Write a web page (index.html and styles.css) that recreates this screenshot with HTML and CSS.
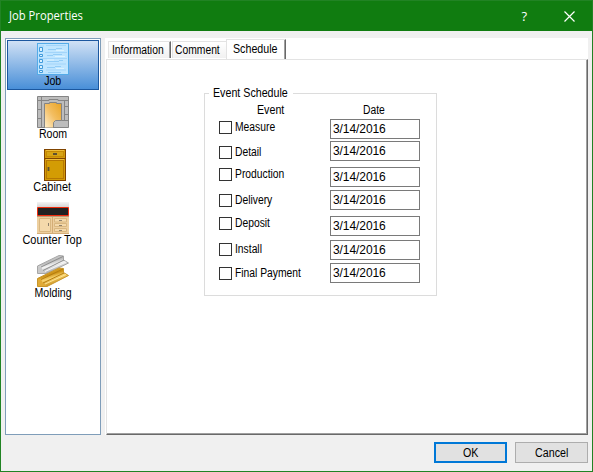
FILE: index.html
```html
<!DOCTYPE html>
<html lang="en">
<head>
<meta charset="utf-8">
<title>Job Properties</title>
<link rel="stylesheet" href="styles.css">
</head>
<body>
<div class="window">
  <header class="titlebar">
    <span class="title">Job Properties</span>
    <span class="help">?</span>
    <svg class="close" width="11" height="11" viewBox="0 0 11 11"><path d="M.5.5l10 10M10.500.5l-10 10" stroke="#fff" stroke-width="1.2"/></svg>
  </header>
  <div class="body">
    <nav class="sidebar">
      <div class="item selected">
        <svg width="32" height="32" viewBox="0 0 32 32">
          <rect x=".5" y=".5" width="31" height="31" fill="#bfe5ff" stroke="#54abe8"/>
          <path d="M2 3h5M9 2.500h20M8 9.500h22M2 15.500h28M8 21h21M9 27h20" stroke="#a3d5fa"/>
          <path d="M11 6.500h8M19 5.500h6M10 12.500h6M16 11.500h9M10 18.500h12M22 17.500h4M10 24.500h8M18 23.500h6M11 29.500h13" stroke="#93cdf7" fill="none"/>
          <path d="M19 7.500h8M18 13.500h10M10 17h7M19 25.500h8" stroke="#dcf3ff"/>
          <g fill="#d9f1ff" stroke="#419bdc"><path d="M2.500 4.500h3v4h-3zM2.500 11.500h3v2h-3zM2.500 16.500h3v3h-3zM2.500 22.500h3v3h-3zM2.500 27.500h3v2h-3z"/></g>
        </svg>
        <span class="label">Job</span>
      </div>
      <div class="item">
        <svg width="32" height="32" viewBox="0 0 32 32">
          <defs><linearGradient id="floor" x1="1" y1="0" x2="0" y2="1"><stop offset="0" stop-color="#e9a321"/><stop offset=".5" stop-color="#f3be62"/><stop offset="1" stop-color="#fff0cf"/></linearGradient></defs>
          <path d="M.5.5h31v31h-31z" fill="#bdbdbd" stroke="#858585"/>
          <path d="M7.500 32V7.500h5v-1h7v1h5V24.500h-6l-2 2V32z" fill="url(#floor)" stroke="#858585"/>
          <path d="M4.500 0v31M0 4.500h12v-1h9v1h11M0 13.500h4M0 22.500h4M27.500 5v19M27.500 10.500h4M27.500 18.500h4M24.500 24.500h7" stroke="#858585" fill="none"/>
        </svg>
        <span class="label">Room</span>
      </div>
      <div class="item">
        <svg width="32" height="32" viewBox="0 0 32 32">
          <rect x="7.500" y=".5" width="21" height="31" fill="#d39b09" stroke="#804400"/>
          <path d="M7 9.500h22" stroke="#804400"/>
          <rect x="9.500" y="2.500" width="17" height="5" fill="#d7a414" stroke="#c58a05"/>
          <rect x="9.500" y="11.500" width="17" height="18" fill="#d39c04" stroke="#b67803"/>
          <path d="M9 10.500h18M9 1.500h18" stroke="#efbd39"/>
          <path d="M16 5h4M11.500 18v4" stroke="#5d5032" stroke-width="1.800"/>
        </svg>
        <span class="label wide">Cabinet</span>
      </div>
      <div class="item">
        <svg width="32" height="32" viewBox="0 0 32 32">
          <defs><linearGradient id="wall" x2="0" y2="1"><stop offset="0" stop-color="#f4f4f4"/><stop offset="1" stop-color="#d5d5d5"/></linearGradient></defs>
          <path fill="url(#wall)" d="M0 0h32v5H0z"/>
          <path fill="#edcf9f" d="M0 14h32v18H0z"/>
          <path fill="#222" stroke="#f02b0c" d="M.5 5.500h31v8H.5z"/>
          <path d="M0 14.500h32" stroke="#b99c77"/>
          <g fill="#f4d9ab" stroke="#d9b780"><path d="M2.500 16.500h11v13h-11zM17.500 16.500h12v3.500h-12zM17.500 21.500h12v3h-12zM17.500 26.500h12v3h-12z"/></g>
          <path d="M15.500 15v16M0 31.500h32" stroke="#d4ad76"/><path d="M11.500 21v3M22 18.500h3M22 23.500h3M22 28.500h3" stroke="#8f816c"/>
        </svg>
        <span class="label wide">Counter Top</span>
      </div>
      <div class="item">
        <svg width="32" height="32" viewBox="0 0 32 32">
          <defs>
            <linearGradient id="steel" x1="0" y1="0" x2=".5" y2="1"><stop offset="0" stop-color="#ddd"/><stop offset=".45" stop-color="#bcbcbc"/><stop offset=".62" stop-color="#f4f4f4"/><stop offset="1" stop-color="#8d8d8d"/></linearGradient>
            <linearGradient id="brass" x1="0" y1="0" x2=".5" y2="1"><stop offset="0" stop-color="#e6b23a"/><stop offset=".45" stop-color="#cc9115"/><stop offset=".62" stop-color="#f8d36d"/><stop offset="1" stop-color="#bd810b"/></linearGradient>
          </defs>
          <path d="M.5 11L22 .5l4.500.5v4l5 3L10 18.500H.5z" fill="url(#steel)" stroke="#a6a6a6"/>
          <path d="M1 11.500l3 .5 2 3.500 4 2.500H1z" fill="#c9c9c9"/>
          <path d="M4 12L26 1.500M6 15.500L27 5" stroke="#8c8c8c"/>
          <path d="M8 16.500L29 7" stroke="#f6f6f6"/>
          <path d="M.5 23.500L22 13l4.500.5v4l5 3L10 31.500H.5z" fill="url(#brass)" stroke="#c9962a"/>
          <path d="M1 24l3 .5 2 3.500 4 3H1z" fill="#e0aa36"/>
          <path d="M4 24.500L26 14M6 28L27 18" stroke="#b67d10"/>
          <path d="M8 29L29 19.500" stroke="#ffe391"/>
        </svg>
        <span class="label">Molding</span>
      </div>
    </nav>
    <main class="tabs">
      <div class="tablist">
        <div class="tab information"><span class="text">Information</span></div>
        <div class="tab comment"><span class="text">Comment</span></div>
        <div class="tab active"><span class="text">Schedule</span></div>
      </div>
      <section class="pane">
        <div class="group">
          <div class="legend"><span class="text">Event Schedule</span></div>
          <div class="heads"><span class="text event">Event</span><span class="text date-head">Date</span></div>
          <div class="columns">
            <div class="events">
              <label class="check"><i></i><span class="text">Measure</span></label>
              <label class="check"><i></i><span class="text">Detail</span></label>
              <label class="check"><i></i><span class="text">Production</span></label>
              <label class="check"><i></i><span class="text">Delivery</span></label>
              <label class="check"><i></i><span class="text">Deposit</span></label>
              <label class="check"><i></i><span class="text">Install</span></label>
              <label class="check"><i></i><span class="text">Final Payment</span></label>
            </div>
            <div class="dates">
              <div class="date">3/14/2016</div>
              <div class="date">3/14/2016</div>
              <div class="date">3/14/2016</div>
              <div class="date">3/14/2016</div>
              <div class="date">3/14/2016</div>
              <div class="date">3/14/2016</div>
              <div class="date">3/14/2016</div>
            </div>
          </div>
        </div>
      </section>
    </main>
  </div>
  <footer class="actions">
    <div class="button primary"><span>OK</span></div>
    <div class="button"><span>Cancel</span></div>
  </footer>
</div>
</body>
</html>
```
FILE: styles.css
```css
* { box-sizing: border-box; }
body { margin: 0; font: 12px/14px "Liberation Sans", Arial, sans-serif; color: #000; }
svg { display: block; flex: none; }
.window { width: 593px; height: 472px; border: 1px solid #218324; background: #f0f0f0; display: flex; flex-direction: column; }
.titlebar { height: 30px; background: #107c10; color: #fff; display: flex; align-items: center; padding: 0 17px 0 8px; font-family: "Open Sans", "Noto Sans", sans-serif; flex: none; }
.title { transform: scaleX(.935); transform-origin: left; white-space: nowrap; }
.help { margin-left: auto; margin-right: 37px; padding-bottom: 1px; font-size: 13px; }
.body { display: flex; padding: 7px 4px 0; margin-bottom: 6px; gap: 4px; flex: none; height: 405px; }
.sidebar { width: 96px; height: 397px; border: 1px solid #7f9db9; background: #fff; padding: 1px; display: flex; flex-direction: column; gap: 3px; }
.item { height: 50px; border: 1px solid transparent; padding-top: 2px; display: flex; flex-direction: column; align-items: center; }
.selected { border-color: #1b579f; background: linear-gradient(#d0e1f5, #498fd8); }
.label { line-height: 12px; white-space: nowrap; transform: scaleX(.88); }
.wide { transform: translateX(-.5px) scaleX(.91); }
.text { display: inline-block; transform: scaleX(.86); transform-origin: left; white-space: nowrap; }
.tabs { width: 483px; height: 397px; background: #fff; display: flex; flex-direction: column; }
.tablist { height: 21px; padding: 1px 0 0 3px; display: flex; align-items: flex-start; }
.tab { height: 17px; margin-top: 2px; border-top: 1px solid #e3e3e3; border-left: 1px solid #e3e3e3; background: linear-gradient(#fff, #f1f1f1); padding: 1px 0 0 3px; overflow: hidden; }
.information { width: 63px; border-right: 1px solid #696969; box-shadow: inset -1px 0 #a0a0a0; }
.comment { width: 54px; margin-left: 1px; padding-left: 2px; }
.active { width: 60px; height: 20px; margin-top: 0; background: #fff; border-right: 1px solid #696969; box-shadow: inset -1px 0 #a0a0a0; padding: 2px 0 0 6px; }
.active .text { transform: scaleX(.89); }
.pane { flex: 1; margin-left: 1px; border-left: 1px solid #e3e3e3; border-top: 1px solid #e3e3e3; border-right: 1px solid #696969; border-bottom: 1px solid #696969; box-shadow: inset -1px -1px #a0a0a0; padding: 33px 0 0 97px; }
.group { width: 233px; height: 203px; border: 1px solid #dcdcdc; }
.legend { width: 84px; height: 14px; margin: -8px 0 0 4px; padding-left: 4px; background: #fff; }
.legend .text { transform: scaleX(.89); }
.heads { height: 14px; display: flex; margin-top: 3px; }
.event { width: 31px; margin-left: 52px; transform: scaleX(.89); }
.date-head { margin-left: 75px; }
.columns { display: flex; padding-left: 14px; }
.events { width: 111px; padding-top: 4px; display: flex; flex-direction: column; }
.check { display: flex; align-items: center; height: 13px; line-height: 15px; gap: 3px; }
.check i { width: 13px; height: 13px; border: 1px solid #333; background: #fff; flex: none; }
.check:nth-child(2) { margin-top: 12px; }
.check:nth-child(3) { margin-top: 9px; }
.check:nth-child(4) { margin-top: 13px; }
.check:nth-child(5) { margin-top: 10px; }
.check:nth-child(6) { margin-top: 13px; }
.check:nth-child(7) { margin-top: 11px; }
.dates { width: 90px; padding-top: 2px; display: flex; flex-direction: column; }
.date { height: 20px; border: 1px solid #7a7a7a; line-height: 18px; padding-left: 2px; letter-spacing: -.08px; }
.date:nth-child(2) { margin-top: 2px; }
.date:nth-child(3) { margin-top: 6px; }
.date:nth-child(4) { margin-top: 3px; }
.date:nth-child(5) { margin-top: 6px; }
.date:nth-child(6) { margin-top: 4px; }
.date:nth-child(7) { margin-top: 3px; }
.actions { display: flex; justify-content: flex-end; gap: 8px; padding-right: 4px; flex: none; }
.button { width: 73px; height: 21px; background: #e1e1e1; border: 1px solid #adadad; display: flex; align-items: center; justify-content: center; }
.button span { transform: scaleX(.89); }
.primary { border: 2px solid #0078d7; }
```
